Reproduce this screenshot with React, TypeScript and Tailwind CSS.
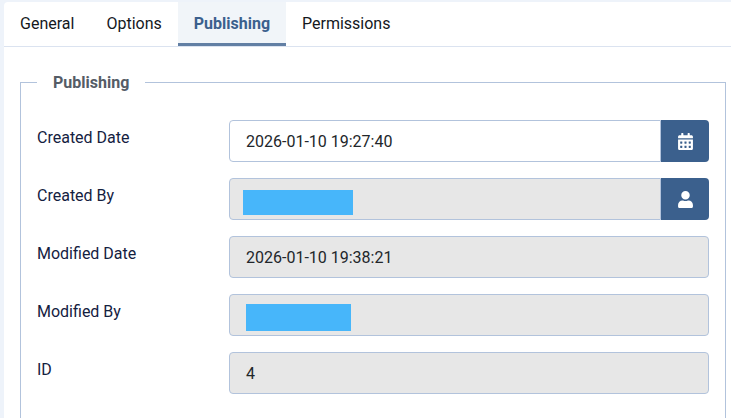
import React from "react";

function CalendarIcon() {
  return (
    <svg width="15" height="17" viewBox="0 0 448 512" fill="currentColor">
      <path d="M0 464c0 26.5 21.5 48 48 48h352c26.5 0 48-21.5 48-48V192H0v272zm320-196c0-6.6 5.4-12 12-12h40c6.6 0 12 5.4 12 12v40c0 6.6-5.4 12-12 12h-40c-6.6 0-12-5.4-12-12v-40zm0 128c0-6.6 5.4-12 12-12h40c6.6 0 12 5.4 12 12v40c0 6.6-5.4 12-12 12h-40c-6.6 0-12-5.4-12-12v-40zM192 268c0-6.6 5.4-12 12-12h40c6.6 0 12 5.4 12 12v40c0 6.6-5.4 12-12 12h-40c-6.6 0-12-5.4-12-12v-40zm0 128c0-6.6 5.4-12 12-12h40c6.6 0 12 5.4 12 12v40c0 6.6-5.4 12-12 12h-40c-6.6 0-12-5.4-12-12v-40zM64 268c0-6.6 5.4-12 12-12h40c6.6 0 12 5.4 12 12v40c0 6.6-5.4 12-12 12H76c-6.6 0-12-5.4-12-12v-40zm0 128c0-6.6 5.4-12 12-12h40c6.6 0 12 5.4 12 12v40c0 6.6-5.4 12-12 12H76c-6.6 0-12-5.4-12-12v-40zM400 64h-48V16c0-8.8-7.2-16-16-16h-32c-8.8 0-16 7.2-16 16v48H160V16c0-8.8-7.2-16-16-16h-32c-8.8 0-16 7.2-16 16v48H48C21.5 64 0 85.5 0 112v48h448v-48c0-26.5-21.5-48-48-48z" />
    </svg>
  );
}

function UserIcon() {
  return (
    <svg width="15" height="17" viewBox="0 0 448 512" fill="currentColor">
      <path d="M224 256c70.700 0 128-57.300 128-128S294.700 0 224 0 96 57.300 96 128s57.300 128 128 128zm89.600 32h-16.700c-22.200 10.200-46.900 16-72.900 16s-50.600-5.800-72.900-16h-16.700C60.200 288 0 348.200 0 422.400V464c0 26.500 21.500 48 48 48h352c26.500 0 48-21.500 48-48v-41.600c0-74.200-60.200-134.400-134.400-134.400z" />
    </svg>
  );
}

function Row({ label, children }: { label: string; children: React.ReactNode }) {
  return (
    <div className="flex mb-4">
      <div className="w-[192px] shrink-0 text-[16px] leading-[24px] pt-[6px] text-[#14213f]">{label}</div>
      <div className="w-[480px] flex">{children}</div>
    </div>
  );
}

function Box({ children, white, joined }: { children?: React.ReactNode; white?: boolean; joined?: boolean }) {
  return (
    <div
      className={`flex-1 h-[42px] border border-[#b2c3dc] flex items-center text-[16px] text-[#22262a] ${
        white ? "bg-white" : "bg-[#e7e7e7]"
      } ${joined ? "rounded-l-[4px]" : "rounded-[4px]"}`}
    >
      {children}
    </div>
  );
}

function Addon({ children }: { children: React.ReactNode }) {
  return (
    <div className="w-[48px] h-[42px] bg-[#3b608d] text-white rounded-r-[4px] flex items-center justify-center shrink-0">
      {children}
    </div>
  );
}

export default function App() {
  return (
    <div className="h-[418px] w-[731px] overflow-hidden bg-[#eef3fa] pl-[4px] pt-[2px] font-['Roboto',sans-serif]">
      <div className="bg-white rounded-tl-[4px] h-[416px]">
        <div className="flex h-[45px] border-b border-[#dbe3f0] text-[16px] text-[#14181d]">
          <div className="px-[16px] leading-[44px]">General</div>
          <div className="px-[16px] leading-[44px]">Options</div>
          <div className="px-[16px] leading-[44px] font-bold text-[#3b608d] bg-[#f1f5f9] border-b-[3px] border-[#627fa4] h-[44px]">Publishing</div>
          <div className="px-[16px] leading-[44px]">Permissions</div>
        </div>
        <div className="pl-[16px] pt-[22px]">
          <fieldset className="w-[706px] border border-[#b2c3dc] pl-[16px] pt-[25px] h-[400px]">
            <legend className="ml-0 px-[16px] pt-[2px] text-[16px] leading-[24px] font-bold text-[#555c66]">Publishing</legend>
            <Row label="Created Date">
              <Box white joined><span className="pl-[16px] pt-[2px]">2026-01-10 19:27:40</span></Box>
              <Addon><CalendarIcon /></Addon>
            </Row>
            <Row label="Created By">
              <Box joined><div className="ml-[13px] mt-[6px] w-[110px] h-[25px] bg-[#47b6fa]" /></Box>
              <Addon><UserIcon /></Addon>
            </Row>
            <Row label="Modified Date">
              <Box><span className="pl-[16px] pt-[2px]">2026-01-10 19:38:21</span></Box>
            </Row>
            <Row label="Modified By">
              <Box><div className="ml-[16px] mt-[5px] w-[105px] h-[27px] bg-[#47b6fa]" /></Box>
            </Row>
            <Row label="ID">
              <Box><span className="pl-[16px] pt-[2px]">4</span></Box>
            </Row>
          </fieldset>
        </div>
      </div>
    </div>
  );
}
